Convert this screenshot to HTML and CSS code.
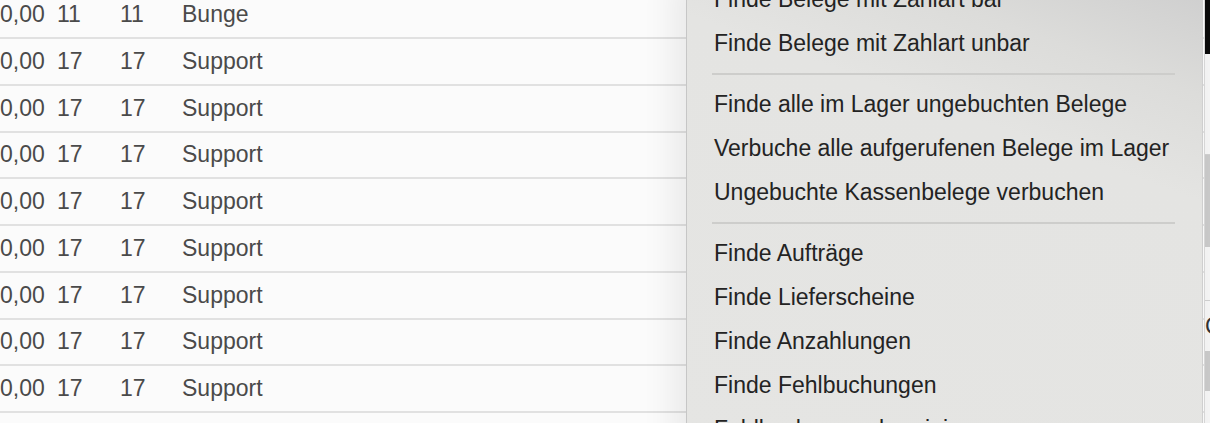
FILE: index.html
```html
<!DOCTYPE html>
<html lang="de">
<head>
  <meta charset="UTF-8" />
  <title>Belege</title>
  <link rel="stylesheet" href="styles.css">
</head>
<body>
<div class="screen">
  <div class="list">
    <div class="row"><span class="num">0,00</span><span>11</span><span>11</span><span>Bunge</span></div>
    <div class="row"><span class="num">0,00</span><span>17</span><span>17</span><span>Support</span></div>
    <div class="row"><span class="num">0,00</span><span>17</span><span>17</span><span>Support</span></div>
    <div class="row"><span class="num">0,00</span><span>17</span><span>17</span><span>Support</span></div>
    <div class="row"><span class="num">0,00</span><span>17</span><span>17</span><span>Support</span></div>
    <div class="row"><span class="num">0,00</span><span>17</span><span>17</span><span>Support</span></div>
    <div class="row"><span class="num">0,00</span><span>17</span><span>17</span><span>Support</span></div>
    <div class="row"><span class="num">0,00</span><span>17</span><span>17</span><span>Support</span></div>
    <div class="row"><span class="num">0,00</span><span>17</span><span>17</span><span>Support</span></div>
  </div>

  <div class="side">
    <div class="side-head"></div>
    <div class="side-light"></div>
    <div class="side-grey"></div>
    <div class="side-light short"></div>
    <div class="side-text">C</div>
    <div class="side-grey small"></div>
    <div class="side-light"></div>
  </div>

  <ul class="menu">
    <li>Finde Belege mit Zahlart bar</li>
    <li>Finde Belege mit Zahlart unbar</li>
    <li class="sep"></li>
    <li>Finde alle im Lager ungebuchten Belege</li>
    <li>Verbuche alle aufgerufenen Belege im Lager</li>
    <li>Ungebuchte Kassenbelege verbuchen</li>
    <li class="sep"></li>
    <li>Finde Aufträge</li>
    <li>Finde Lieferscheine</li>
    <li>Finde Anzahlungen</li>
    <li>Finde Fehlbuchungen</li>
    <li>Fehlbuchungen bereinigen</li>
  </ul>
</div>
</body>
</html>
```

FILE: styles.css
```css
body {
  margin: 0;
  overflow: hidden;
  font-family: "Liberation Sans", Arial, sans-serif;
  font-size: 23px;
  background: #fbfbfb;
}

.screen {
  position: relative;
  display: grid;
  grid-template-columns: 1204px 1fr;
  height: 423px;
  overflow: hidden;
}

.list {
  margin-top: -7.75px;
  color: #4a4a4a;
}

.row {
  display: grid;
  grid-template-columns: 57px 63px 62px 1fr;
  align-items: center;
  height: 46.75px;
  box-sizing: border-box;
  border-bottom: 2px solid #e1e1e1;
  background: #fbfbfb;
}

.row .num {
  text-align: right;
  padding-right: 15px;
}

.side {
  display: flex;
  flex-direction: column;
  background: #f4f4f4;
  border-left: 1px solid #d8d8d8;
}

.side-head {
  height: 54px;
  background: #0b0b0b;
}

.side-light {
  height: 100px;
  border-bottom: 1px solid #cfcfcf;
}

.side-light.short {
  height: 53px;
}

.side-grey {
  height: 92px;
  background: #c9c9c9;
}

.side-grey.small {
  height: 40px;
}

.side-text {
  height: 50px;
  line-height: 50px;
  color: #333;
}

.menu {
  position: absolute;
  left: 686px;
  top: -23px;
  width: 517px;
  margin: 0;
  padding: 0;
  list-style: none;
  box-sizing: border-box;
  border-left: 1px solid #c6c6c6;
  border-right: 1px solid #cfcfcf;
  background: linear-gradient(200deg, #cdcdcd 0%, #dcdcda 18%, #e4e4e2 34%, #e5e5e3 100%);
  box-shadow: -14px 0 30px rgba(0, 0, 0, 0.07);
  color: #232323;
}

.menu li {
  height: 44px;
  line-height: 44px;
  padding-left: 27px;
  white-space: nowrap;
}

.menu li.sep {
  height: 17px;
  display: flex;
  align-items: center;
  padding: 0 27px 0 25px;
}

.menu li.sep::before {
  content: "";
  flex: 1;
  height: 2px;
  background: #cdcdcb;
}
```
